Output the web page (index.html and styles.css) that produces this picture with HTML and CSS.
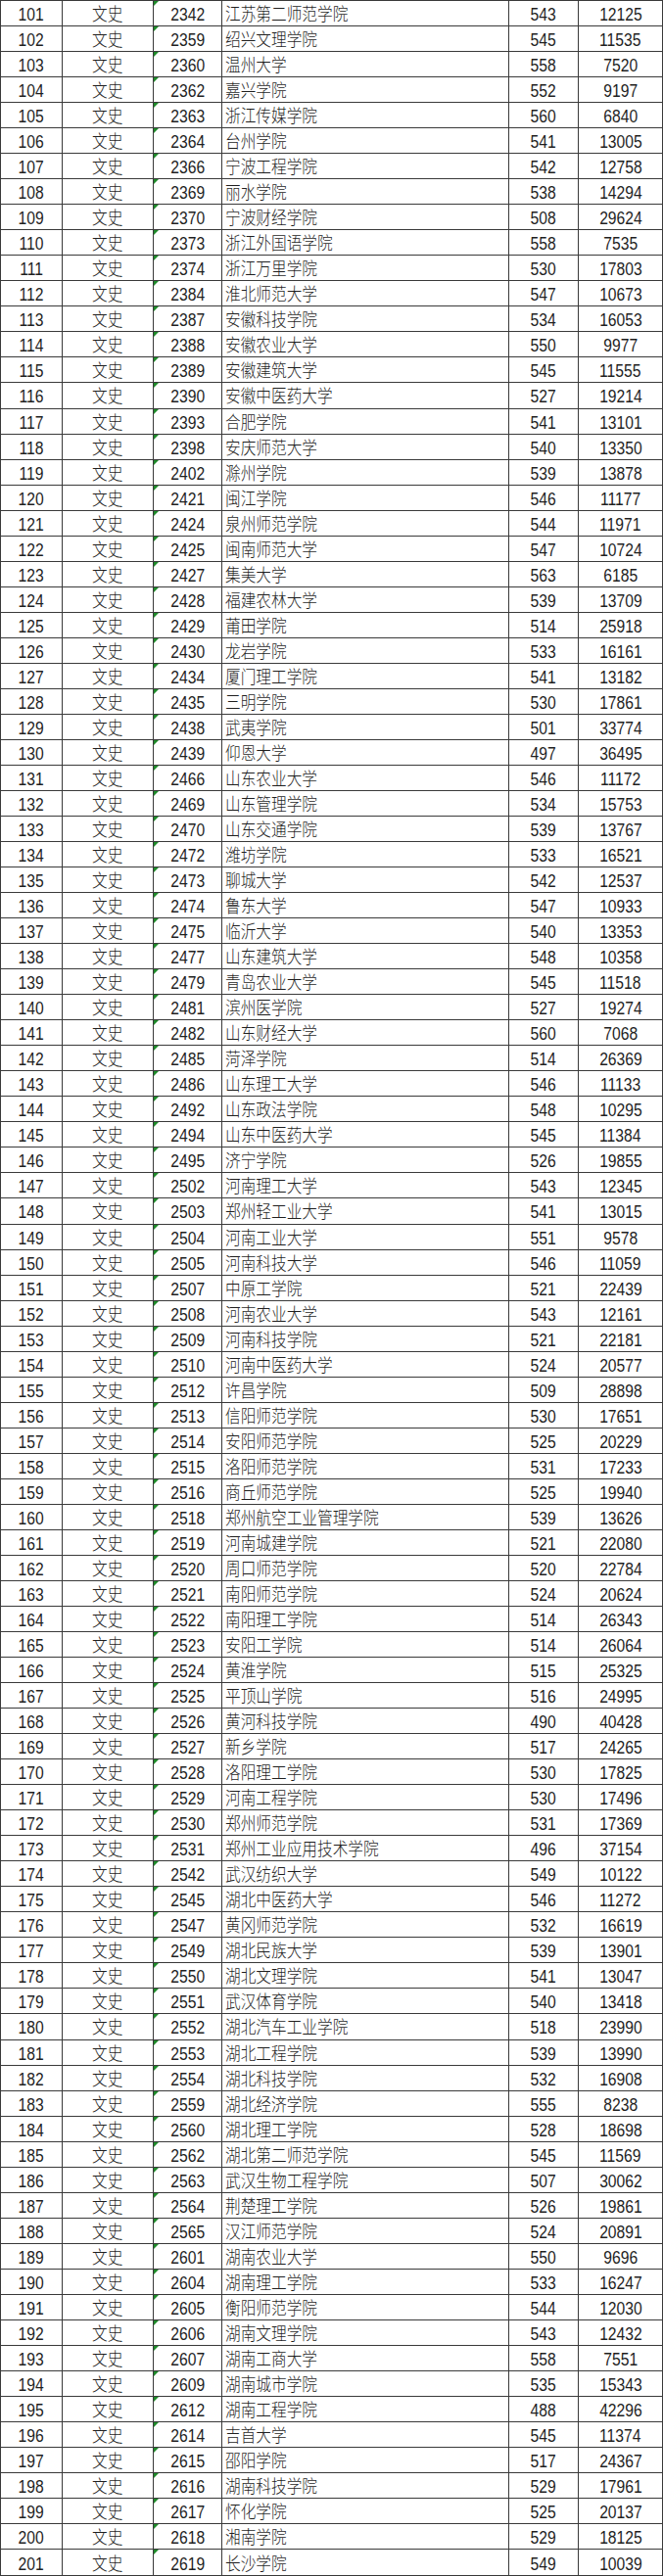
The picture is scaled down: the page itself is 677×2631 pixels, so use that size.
FILE: index.html
```html
<!DOCTYPE html>
<html lang="zh-CN">
<head>
<meta charset="utf-8">
<title>文史 投档线</title>
<link rel="stylesheet" href="styles.css">
</head>
<body>
<table class="sheet">
<colgroup><col class="c-no"><col class="c-type"><col class="c-code"><col class="c-name"><col class="c-score"><col class="c-rank"></colgroup>
<tbody>
<tr><td><span>101</span></td><td><span>文史</span></td><td class="code"><span>2342</span></td><td class="name"><span>江苏第二师范学院</span></td><td><span>543</span></td><td><span>12125</span></td></tr>
<tr><td><span>102</span></td><td><span>文史</span></td><td class="code"><span>2359</span></td><td class="name"><span>绍兴文理学院</span></td><td><span>545</span></td><td><span>11535</span></td></tr>
<tr><td><span>103</span></td><td><span>文史</span></td><td class="code"><span>2360</span></td><td class="name"><span>温州大学</span></td><td><span>558</span></td><td><span>7520</span></td></tr>
<tr><td><span>104</span></td><td><span>文史</span></td><td class="code"><span>2362</span></td><td class="name"><span>嘉兴学院</span></td><td><span>552</span></td><td><span>9197</span></td></tr>
<tr><td><span>105</span></td><td><span>文史</span></td><td class="code"><span>2363</span></td><td class="name"><span>浙江传媒学院</span></td><td><span>560</span></td><td><span>6840</span></td></tr>
<tr><td><span>106</span></td><td><span>文史</span></td><td class="code"><span>2364</span></td><td class="name"><span>台州学院</span></td><td><span>541</span></td><td><span>13005</span></td></tr>
<tr><td><span>107</span></td><td><span>文史</span></td><td class="code"><span>2366</span></td><td class="name"><span>宁波工程学院</span></td><td><span>542</span></td><td><span>12758</span></td></tr>
<tr><td><span>108</span></td><td><span>文史</span></td><td class="code"><span>2369</span></td><td class="name"><span>丽水学院</span></td><td><span>538</span></td><td><span>14294</span></td></tr>
<tr><td><span>109</span></td><td><span>文史</span></td><td class="code"><span>2370</span></td><td class="name"><span>宁波财经学院</span></td><td><span>508</span></td><td><span>29624</span></td></tr>
<tr><td><span>110</span></td><td><span>文史</span></td><td class="code"><span>2373</span></td><td class="name"><span>浙江外国语学院</span></td><td><span>558</span></td><td><span>7535</span></td></tr>
<tr><td><span>111</span></td><td><span>文史</span></td><td class="code"><span>2374</span></td><td class="name"><span>浙江万里学院</span></td><td><span>530</span></td><td><span>17803</span></td></tr>
<tr><td><span>112</span></td><td><span>文史</span></td><td class="code"><span>2384</span></td><td class="name"><span>淮北师范大学</span></td><td><span>547</span></td><td><span>10673</span></td></tr>
<tr><td><span>113</span></td><td><span>文史</span></td><td class="code"><span>2387</span></td><td class="name"><span>安徽科技学院</span></td><td><span>534</span></td><td><span>16053</span></td></tr>
<tr><td><span>114</span></td><td><span>文史</span></td><td class="code"><span>2388</span></td><td class="name"><span>安徽农业大学</span></td><td><span>550</span></td><td><span>9977</span></td></tr>
<tr><td><span>115</span></td><td><span>文史</span></td><td class="code"><span>2389</span></td><td class="name"><span>安徽建筑大学</span></td><td><span>545</span></td><td><span>11555</span></td></tr>
<tr><td><span>116</span></td><td><span>文史</span></td><td class="code"><span>2390</span></td><td class="name"><span>安徽中医药大学</span></td><td><span>527</span></td><td><span>19214</span></td></tr>
<tr><td><span>117</span></td><td><span>文史</span></td><td class="code"><span>2393</span></td><td class="name"><span>合肥学院</span></td><td><span>541</span></td><td><span>13101</span></td></tr>
<tr><td><span>118</span></td><td><span>文史</span></td><td class="code"><span>2398</span></td><td class="name"><span>安庆师范大学</span></td><td><span>540</span></td><td><span>13350</span></td></tr>
<tr><td><span>119</span></td><td><span>文史</span></td><td class="code"><span>2402</span></td><td class="name"><span>滁州学院</span></td><td><span>539</span></td><td><span>13878</span></td></tr>
<tr><td><span>120</span></td><td><span>文史</span></td><td class="code"><span>2421</span></td><td class="name"><span>闽江学院</span></td><td><span>546</span></td><td><span>11177</span></td></tr>
<tr><td><span>121</span></td><td><span>文史</span></td><td class="code"><span>2424</span></td><td class="name"><span>泉州师范学院</span></td><td><span>544</span></td><td><span>11971</span></td></tr>
<tr><td><span>122</span></td><td><span>文史</span></td><td class="code"><span>2425</span></td><td class="name"><span>闽南师范大学</span></td><td><span>547</span></td><td><span>10724</span></td></tr>
<tr><td><span>123</span></td><td><span>文史</span></td><td class="code"><span>2427</span></td><td class="name"><span>集美大学</span></td><td><span>563</span></td><td><span>6185</span></td></tr>
<tr><td><span>124</span></td><td><span>文史</span></td><td class="code"><span>2428</span></td><td class="name"><span>福建农林大学</span></td><td><span>539</span></td><td><span>13709</span></td></tr>
<tr><td><span>125</span></td><td><span>文史</span></td><td class="code"><span>2429</span></td><td class="name"><span>莆田学院</span></td><td><span>514</span></td><td><span>25918</span></td></tr>
<tr><td><span>126</span></td><td><span>文史</span></td><td class="code"><span>2430</span></td><td class="name"><span>龙岩学院</span></td><td><span>533</span></td><td><span>16161</span></td></tr>
<tr><td><span>127</span></td><td><span>文史</span></td><td class="code"><span>2434</span></td><td class="name"><span>厦门理工学院</span></td><td><span>541</span></td><td><span>13182</span></td></tr>
<tr><td><span>128</span></td><td><span>文史</span></td><td class="code"><span>2435</span></td><td class="name"><span>三明学院</span></td><td><span>530</span></td><td><span>17861</span></td></tr>
<tr><td><span>129</span></td><td><span>文史</span></td><td class="code"><span>2438</span></td><td class="name"><span>武夷学院</span></td><td><span>501</span></td><td><span>33774</span></td></tr>
<tr><td><span>130</span></td><td><span>文史</span></td><td class="code"><span>2439</span></td><td class="name"><span>仰恩大学</span></td><td><span>497</span></td><td><span>36495</span></td></tr>
<tr><td><span>131</span></td><td><span>文史</span></td><td class="code"><span>2466</span></td><td class="name"><span>山东农业大学</span></td><td><span>546</span></td><td><span>11172</span></td></tr>
<tr><td><span>132</span></td><td><span>文史</span></td><td class="code"><span>2469</span></td><td class="name"><span>山东管理学院</span></td><td><span>534</span></td><td><span>15753</span></td></tr>
<tr><td><span>133</span></td><td><span>文史</span></td><td class="code"><span>2470</span></td><td class="name"><span>山东交通学院</span></td><td><span>539</span></td><td><span>13767</span></td></tr>
<tr><td><span>134</span></td><td><span>文史</span></td><td class="code"><span>2472</span></td><td class="name"><span>潍坊学院</span></td><td><span>533</span></td><td><span>16521</span></td></tr>
<tr><td><span>135</span></td><td><span>文史</span></td><td class="code"><span>2473</span></td><td class="name"><span>聊城大学</span></td><td><span>542</span></td><td><span>12537</span></td></tr>
<tr><td><span>136</span></td><td><span>文史</span></td><td class="code"><span>2474</span></td><td class="name"><span>鲁东大学</span></td><td><span>547</span></td><td><span>10933</span></td></tr>
<tr><td><span>137</span></td><td><span>文史</span></td><td class="code"><span>2475</span></td><td class="name"><span>临沂大学</span></td><td><span>540</span></td><td><span>13353</span></td></tr>
<tr><td><span>138</span></td><td><span>文史</span></td><td class="code"><span>2477</span></td><td class="name"><span>山东建筑大学</span></td><td><span>548</span></td><td><span>10358</span></td></tr>
<tr><td><span>139</span></td><td><span>文史</span></td><td class="code"><span>2479</span></td><td class="name"><span>青岛农业大学</span></td><td><span>545</span></td><td><span>11518</span></td></tr>
<tr><td><span>140</span></td><td><span>文史</span></td><td class="code"><span>2481</span></td><td class="name"><span>滨州医学院</span></td><td><span>527</span></td><td><span>19274</span></td></tr>
<tr><td><span>141</span></td><td><span>文史</span></td><td class="code"><span>2482</span></td><td class="name"><span>山东财经大学</span></td><td><span>560</span></td><td><span>7068</span></td></tr>
<tr><td><span>142</span></td><td><span>文史</span></td><td class="code"><span>2485</span></td><td class="name"><span>菏泽学院</span></td><td><span>514</span></td><td><span>26369</span></td></tr>
<tr><td><span>143</span></td><td><span>文史</span></td><td class="code"><span>2486</span></td><td class="name"><span>山东理工大学</span></td><td><span>546</span></td><td><span>11133</span></td></tr>
<tr><td><span>144</span></td><td><span>文史</span></td><td class="code"><span>2492</span></td><td class="name"><span>山东政法学院</span></td><td><span>548</span></td><td><span>10295</span></td></tr>
<tr><td><span>145</span></td><td><span>文史</span></td><td class="code"><span>2494</span></td><td class="name"><span>山东中医药大学</span></td><td><span>545</span></td><td><span>11384</span></td></tr>
<tr><td><span>146</span></td><td><span>文史</span></td><td class="code"><span>2495</span></td><td class="name"><span>济宁学院</span></td><td><span>526</span></td><td><span>19855</span></td></tr>
<tr><td><span>147</span></td><td><span>文史</span></td><td class="code"><span>2502</span></td><td class="name"><span>河南理工大学</span></td><td><span>543</span></td><td><span>12345</span></td></tr>
<tr><td><span>148</span></td><td><span>文史</span></td><td class="code"><span>2503</span></td><td class="name"><span>郑州轻工业大学</span></td><td><span>541</span></td><td><span>13015</span></td></tr>
<tr><td><span>149</span></td><td><span>文史</span></td><td class="code"><span>2504</span></td><td class="name"><span>河南工业大学</span></td><td><span>551</span></td><td><span>9578</span></td></tr>
<tr><td><span>150</span></td><td><span>文史</span></td><td class="code"><span>2505</span></td><td class="name"><span>河南科技大学</span></td><td><span>546</span></td><td><span>11059</span></td></tr>
<tr><td><span>151</span></td><td><span>文史</span></td><td class="code"><span>2507</span></td><td class="name"><span>中原工学院</span></td><td><span>521</span></td><td><span>22439</span></td></tr>
<tr><td><span>152</span></td><td><span>文史</span></td><td class="code"><span>2508</span></td><td class="name"><span>河南农业大学</span></td><td><span>543</span></td><td><span>12161</span></td></tr>
<tr><td><span>153</span></td><td><span>文史</span></td><td class="code"><span>2509</span></td><td class="name"><span>河南科技学院</span></td><td><span>521</span></td><td><span>22181</span></td></tr>
<tr><td><span>154</span></td><td><span>文史</span></td><td class="code"><span>2510</span></td><td class="name"><span>河南中医药大学</span></td><td><span>524</span></td><td><span>20577</span></td></tr>
<tr><td><span>155</span></td><td><span>文史</span></td><td class="code"><span>2512</span></td><td class="name"><span>许昌学院</span></td><td><span>509</span></td><td><span>28898</span></td></tr>
<tr><td><span>156</span></td><td><span>文史</span></td><td class="code"><span>2513</span></td><td class="name"><span>信阳师范学院</span></td><td><span>530</span></td><td><span>17651</span></td></tr>
<tr><td><span>157</span></td><td><span>文史</span></td><td class="code"><span>2514</span></td><td class="name"><span>安阳师范学院</span></td><td><span>525</span></td><td><span>20229</span></td></tr>
<tr><td><span>158</span></td><td><span>文史</span></td><td class="code"><span>2515</span></td><td class="name"><span>洛阳师范学院</span></td><td><span>531</span></td><td><span>17233</span></td></tr>
<tr><td><span>159</span></td><td><span>文史</span></td><td class="code"><span>2516</span></td><td class="name"><span>商丘师范学院</span></td><td><span>525</span></td><td><span>19940</span></td></tr>
<tr><td><span>160</span></td><td><span>文史</span></td><td class="code"><span>2518</span></td><td class="name"><span>郑州航空工业管理学院</span></td><td><span>539</span></td><td><span>13626</span></td></tr>
<tr><td><span>161</span></td><td><span>文史</span></td><td class="code"><span>2519</span></td><td class="name"><span>河南城建学院</span></td><td><span>521</span></td><td><span>22080</span></td></tr>
<tr><td><span>162</span></td><td><span>文史</span></td><td class="code"><span>2520</span></td><td class="name"><span>周口师范学院</span></td><td><span>520</span></td><td><span>22784</span></td></tr>
<tr><td><span>163</span></td><td><span>文史</span></td><td class="code"><span>2521</span></td><td class="name"><span>南阳师范学院</span></td><td><span>524</span></td><td><span>20624</span></td></tr>
<tr><td><span>164</span></td><td><span>文史</span></td><td class="code"><span>2522</span></td><td class="name"><span>南阳理工学院</span></td><td><span>514</span></td><td><span>26343</span></td></tr>
<tr><td><span>165</span></td><td><span>文史</span></td><td class="code"><span>2523</span></td><td class="name"><span>安阳工学院</span></td><td><span>514</span></td><td><span>26064</span></td></tr>
<tr><td><span>166</span></td><td><span>文史</span></td><td class="code"><span>2524</span></td><td class="name"><span>黄淮学院</span></td><td><span>515</span></td><td><span>25325</span></td></tr>
<tr><td><span>167</span></td><td><span>文史</span></td><td class="code"><span>2525</span></td><td class="name"><span>平顶山学院</span></td><td><span>516</span></td><td><span>24995</span></td></tr>
<tr><td><span>168</span></td><td><span>文史</span></td><td class="code"><span>2526</span></td><td class="name"><span>黄河科技学院</span></td><td><span>490</span></td><td><span>40428</span></td></tr>
<tr><td><span>169</span></td><td><span>文史</span></td><td class="code"><span>2527</span></td><td class="name"><span>新乡学院</span></td><td><span>517</span></td><td><span>24265</span></td></tr>
<tr><td><span>170</span></td><td><span>文史</span></td><td class="code"><span>2528</span></td><td class="name"><span>洛阳理工学院</span></td><td><span>530</span></td><td><span>17825</span></td></tr>
<tr><td><span>171</span></td><td><span>文史</span></td><td class="code"><span>2529</span></td><td class="name"><span>河南工程学院</span></td><td><span>530</span></td><td><span>17496</span></td></tr>
<tr><td><span>172</span></td><td><span>文史</span></td><td class="code"><span>2530</span></td><td class="name"><span>郑州师范学院</span></td><td><span>531</span></td><td><span>17369</span></td></tr>
<tr><td><span>173</span></td><td><span>文史</span></td><td class="code"><span>2531</span></td><td class="name"><span>郑州工业应用技术学院</span></td><td><span>496</span></td><td><span>37154</span></td></tr>
<tr><td><span>174</span></td><td><span>文史</span></td><td class="code"><span>2542</span></td><td class="name"><span>武汉纺织大学</span></td><td><span>549</span></td><td><span>10122</span></td></tr>
<tr><td><span>175</span></td><td><span>文史</span></td><td class="code"><span>2545</span></td><td class="name"><span>湖北中医药大学</span></td><td><span>546</span></td><td><span>11272</span></td></tr>
<tr><td><span>176</span></td><td><span>文史</span></td><td class="code"><span>2547</span></td><td class="name"><span>黄冈师范学院</span></td><td><span>532</span></td><td><span>16619</span></td></tr>
<tr><td><span>177</span></td><td><span>文史</span></td><td class="code"><span>2549</span></td><td class="name"><span>湖北民族大学</span></td><td><span>539</span></td><td><span>13901</span></td></tr>
<tr><td><span>178</span></td><td><span>文史</span></td><td class="code"><span>2550</span></td><td class="name"><span>湖北文理学院</span></td><td><span>541</span></td><td><span>13047</span></td></tr>
<tr><td><span>179</span></td><td><span>文史</span></td><td class="code"><span>2551</span></td><td class="name"><span>武汉体育学院</span></td><td><span>540</span></td><td><span>13418</span></td></tr>
<tr><td><span>180</span></td><td><span>文史</span></td><td class="code"><span>2552</span></td><td class="name"><span>湖北汽车工业学院</span></td><td><span>518</span></td><td><span>23990</span></td></tr>
<tr><td><span>181</span></td><td><span>文史</span></td><td class="code"><span>2553</span></td><td class="name"><span>湖北工程学院</span></td><td><span>539</span></td><td><span>13990</span></td></tr>
<tr><td><span>182</span></td><td><span>文史</span></td><td class="code"><span>2554</span></td><td class="name"><span>湖北科技学院</span></td><td><span>532</span></td><td><span>16908</span></td></tr>
<tr><td><span>183</span></td><td><span>文史</span></td><td class="code"><span>2559</span></td><td class="name"><span>湖北经济学院</span></td><td><span>555</span></td><td><span>8238</span></td></tr>
<tr><td><span>184</span></td><td><span>文史</span></td><td class="code"><span>2560</span></td><td class="name"><span>湖北理工学院</span></td><td><span>528</span></td><td><span>18698</span></td></tr>
<tr><td><span>185</span></td><td><span>文史</span></td><td class="code"><span>2562</span></td><td class="name"><span>湖北第二师范学院</span></td><td><span>545</span></td><td><span>11569</span></td></tr>
<tr><td><span>186</span></td><td><span>文史</span></td><td class="code"><span>2563</span></td><td class="name"><span>武汉生物工程学院</span></td><td><span>507</span></td><td><span>30062</span></td></tr>
<tr><td><span>187</span></td><td><span>文史</span></td><td class="code"><span>2564</span></td><td class="name"><span>荆楚理工学院</span></td><td><span>526</span></td><td><span>19861</span></td></tr>
<tr><td><span>188</span></td><td><span>文史</span></td><td class="code"><span>2565</span></td><td class="name"><span>汉江师范学院</span></td><td><span>524</span></td><td><span>20891</span></td></tr>
<tr><td><span>189</span></td><td><span>文史</span></td><td class="code"><span>2601</span></td><td class="name"><span>湖南农业大学</span></td><td><span>550</span></td><td><span>9696</span></td></tr>
<tr><td><span>190</span></td><td><span>文史</span></td><td class="code"><span>2604</span></td><td class="name"><span>湖南理工学院</span></td><td><span>533</span></td><td><span>16247</span></td></tr>
<tr><td><span>191</span></td><td><span>文史</span></td><td class="code"><span>2605</span></td><td class="name"><span>衡阳师范学院</span></td><td><span>544</span></td><td><span>12030</span></td></tr>
<tr><td><span>192</span></td><td><span>文史</span></td><td class="code"><span>2606</span></td><td class="name"><span>湖南文理学院</span></td><td><span>543</span></td><td><span>12432</span></td></tr>
<tr><td><span>193</span></td><td><span>文史</span></td><td class="code"><span>2607</span></td><td class="name"><span>湖南工商大学</span></td><td><span>558</span></td><td><span>7551</span></td></tr>
<tr><td><span>194</span></td><td><span>文史</span></td><td class="code"><span>2609</span></td><td class="name"><span>湖南城市学院</span></td><td><span>535</span></td><td><span>15343</span></td></tr>
<tr><td><span>195</span></td><td><span>文史</span></td><td class="code"><span>2612</span></td><td class="name"><span>湖南工程学院</span></td><td><span>488</span></td><td><span>42296</span></td></tr>
<tr><td><span>196</span></td><td><span>文史</span></td><td class="code"><span>2614</span></td><td class="name"><span>吉首大学</span></td><td><span>545</span></td><td><span>11374</span></td></tr>
<tr><td><span>197</span></td><td><span>文史</span></td><td class="code"><span>2615</span></td><td class="name"><span>邵阳学院</span></td><td><span>517</span></td><td><span>24367</span></td></tr>
<tr><td><span>198</span></td><td><span>文史</span></td><td class="code"><span>2616</span></td><td class="name"><span>湖南科技学院</span></td><td><span>529</span></td><td><span>17961</span></td></tr>
<tr><td><span>199</span></td><td><span>文史</span></td><td class="code"><span>2617</span></td><td class="name"><span>怀化学院</span></td><td><span>525</span></td><td><span>20137</span></td></tr>
<tr><td><span>200</span></td><td><span>文史</span></td><td class="code"><span>2618</span></td><td class="name"><span>湘南学院</span></td><td><span>529</span></td><td><span>18125</span></td></tr>
<tr><td><span>201</span></td><td><span>文史</span></td><td class="code"><span>2619</span></td><td class="name"><span>长沙学院</span></td><td><span>549</span></td><td><span>10039</span></td></tr>
</tbody>
</table>
</body>
</html>
```

FILE: styles.css
```css
html, body {
  margin: 0;
  padding: 0;
  background: #ffffff;
}

.sheet {
  width: 677px;
  height: 2631px;
  table-layout: fixed;
  border-collapse: collapse;
  font-family: "Liberation Sans", "Noto Sans CJK SC", sans-serif;
  font-size: 18.67px;
  font-weight: 300;
  color: #1f1f1f;
}

.c-no { width: 63px; }
.c-type { width: 93px; }
.c-code { width: 70px; }
.c-name { width: 293px; }
.c-score { width: 71px; }
.c-rank { width: 86px; }

.sheet tr {
  height: 26px;
}

.sheet td {
  border: 1px solid #3a3a3a;
  padding: 2px 0 0 0;
  text-align: center;
  vertical-align: middle;
  white-space: nowrap;
  overflow: hidden;
  line-height: 21px;
}

.sheet td span {
  display: inline-block;
  transform: scaleX(0.84);
  transform-origin: 50% 50%;
}

.sheet td.name {
  text-align: left;
  padding-left: 3px;
}

.sheet td.name span {
  transform-origin: 0 50%;
}

.sheet td.code {
  position: relative;
}

.sheet td.code::before {
  content: "";
  position: absolute;
  top: 0;
  left: 0;
  width: 0;
  height: 0;
  border-top: 5px solid #1f8a2a;
  border-right: 5px solid transparent;
}
```
